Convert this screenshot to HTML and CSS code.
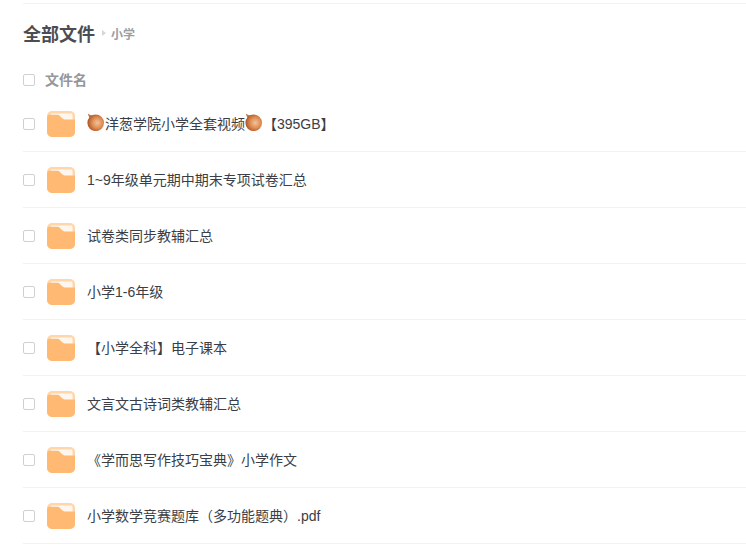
FILE: index.html
```html
<!DOCTYPE html>
<html lang="zh">
<head>
<meta charset="utf-8">
<title>全部文件</title>
<link rel="stylesheet" href="styles.css">
</head>
<body>
<svg class="defs" width="0" height="0" aria-hidden="true">
  <defs>
    <radialGradient id="onion" cx="0.6" cy="0.5" r="0.62">
      <stop offset="0" stop-color="#f0c49c"/>
      <stop offset="0.5" stop-color="#e08f55"/>
      <stop offset="1" stop-color="#a84e24"/>
    </radialGradient>
    <symbol id="folder" viewBox="0 0 28 26">
      <rect width="28" height="26" rx="5" fill="#ffd6a8"/>
      <path d="M4 2.500h20a1.500 1.500 0 0 1 1.500 1.500v5H4z" fill="#fff7ef"/>
      <path d="M0 6Q0 3.800 2.500 3.800h8q1.300 0 2.300 1l2.400 2.500q1 1.100 2.500 1.100H28V21a5 5 0 0 1-5 5H5a5 5 0 0 1-5-5z" fill="#ffb973"/>
    </symbol>
    <symbol id="onion-icon" viewBox="0 0 18 18">
      <path d="M0.800 0.500Q2.500 1.800 5.500 2.500L3 6Q1.500 3.500 0.800 0.500z" fill="#b97a48"/>
      <circle cx="8.700" cy="9.800" r="8.300" fill="url(#onion)"/>
    </symbol>
  </defs>
</svg>
<main class="page">
  <header class="crumbs">
    <h1 class="crumbs-title">全部文件</h1>
    <span class="crumbs-arrow"></span>
    <span class="crumbs-sub">小学</span>
  </header>
  <div class="list-head">
    <span class="check"></span>
    <span class="list-head-label">文件名</span>
  </div>
  <ul class="list">
    <li class="row">
      <span class="check"></span>
      <svg class="folder"><use href="#folder"/></svg>
      <span class="name name-emoji"><svg class="onion"><use href="#onion-icon"/></svg>洋葱学院小学全套视频<svg class="onion"><use href="#onion-icon"/></svg>【395GB】</span>
    </li>
    <li class="row">
      <span class="check"></span>
      <svg class="folder"><use href="#folder"/></svg>
      <span class="name">1~9年级单元期中期末专项试卷汇总</span>
    </li>
    <li class="row">
      <span class="check"></span>
      <svg class="folder"><use href="#folder"/></svg>
      <span class="name">试卷类同步教辅汇总</span>
    </li>
    <li class="row">
      <span class="check"></span>
      <svg class="folder"><use href="#folder"/></svg>
      <span class="name">小学1-6年级</span>
    </li>
    <li class="row">
      <span class="check"></span>
      <svg class="folder"><use href="#folder"/></svg>
      <span class="name">【小学全科】电子课本</span>
    </li>
    <li class="row">
      <span class="check"></span>
      <svg class="folder"><use href="#folder"/></svg>
      <span class="name">文言文古诗词类教辅汇总</span>
    </li>
    <li class="row">
      <span class="check"></span>
      <svg class="folder"><use href="#folder"/></svg>
      <span class="name">《学而思写作技巧宝典》小学作文</span>
    </li>
    <li class="row">
      <span class="check"></span>
      <svg class="folder"><use href="#folder"/></svg>
      <span class="name">小学数学竞赛题库（多功能题典）.pdf</span>
    </li>
  </ul>
</main>
</body>
</html>
```

FILE: styles.css
```css
* { box-sizing: border-box; }
html, body { margin: 0; padding: 0; background: #fff; }
body {
  font-family: "Liberation Sans", "Noto Sans CJK SC", sans-serif;
  color: #3b3e44;
  overflow: hidden;
}
.defs { position: absolute; }
.page {
  margin-top: 3px;
  margin-left: 23px;
  border-top: 1px solid #f2f2f2;
}
.crumbs {
  display: flex;
  align-items: center;
  height: 60px;
  padding-bottom: 2px;
}
.crumbs-title {
  margin: 0;
  font-size: 18px;
  font-weight: 700;
  color: #4a4d53;
}
.crumbs-arrow {
  margin: 0 5px 0 7px;
  border-left: 4px solid #d4d6da;
  border-top: 3px solid transparent;
  border-bottom: 3px solid transparent;
}
.crumbs-sub {
  font-size: 12px;
  font-weight: 700;
  color: #9a9da2;
}
.check {
  flex: none;
  width: 12px;
  height: 12px;
  border: 1px solid #d0d0d0;
  border-radius: 2px;
  background: #fff;
}
.list-head {
  display: flex;
  align-items: center;
  gap: 10px;
  height: 32px;
}
.list-head-label {
  margin-bottom: 2px;
  font-size: 14px;
  font-weight: 700;
  color: #94979c;
}
.list {
  list-style: none;
  margin: 0;
  padding: 0;
}
.row {
  display: flex;
  align-items: center;
  height: 56px;
  border-bottom: 1px solid #f2f2f2;
}
.folder {
  flex: none;
  width: 28px;
  height: 26px;
  margin-top: 1px;
  margin-left: 12px;
}
.name {
  margin-left: 12px;
  font-size: 14px;
  line-height: 20px;
  color: #3b3e44;
}
.name-emoji {
  display: flex;
  align-items: center;
}
.onion {
  flex: none;
  width: 18px;
  height: 18px;
  margin-bottom: 4px;
}
```
